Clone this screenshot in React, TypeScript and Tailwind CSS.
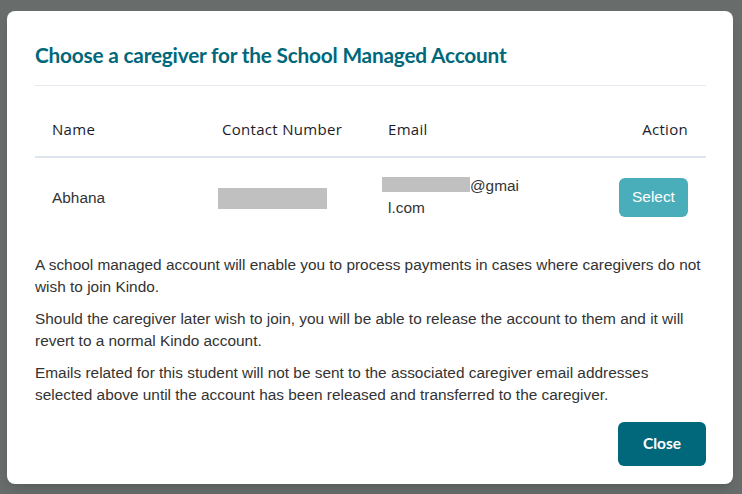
import React from 'react';

const rows = [{ name: 'Abhana' }];

const App = () => {
  return (
    <div className="w-[742px] h-[494px] bg-[#686d6b] pt-[11px] pl-[7px] overflow-hidden">
      <div className="w-[726px] h-[473px] bg-white rounded-lg shadow-lg pt-[30px] pl-[28px] pr-[27px] pb-[18px] flex flex-col">
        <h2 className="font-['Lato',sans-serif] text-[20.8px] leading-[28px] font-bold text-[#00687a] tracking-[-0.2px]">
          Choose a caregiver for the School Managed Account
        </h2>
        <div className="mt-[16px] h-px bg-[#e4e8ef]" />
        <table className="w-full border-collapse font-['Liberation_Sans',Arial,sans-serif]">
          <thead>
            <tr className="border-b-2 border-[#dfe5ee] text-[15px] tracking-[0.3px] text-[#1c1c2a] font-['Open_Sans',sans-serif]">
              <th className="w-[170px] text-left font-normal pl-[17px] pt-[33px] pb-[17px] leading-[20px]">Name</th>
              <th className="w-[166px] text-left font-normal pl-[17px] pt-[33px] pb-[17px] leading-[20px]">Contact Number</th>
              <th className="w-[160px] text-left font-normal pl-[17px] pt-[33px] pb-[17px] leading-[20px]">Email</th>
              <th className="text-right font-normal pr-[18px] pt-[33px] pb-[17px] leading-[20px]">Action</th>
            </tr>
          </thead>
          <tbody>
            {rows.map(r => (
              <tr key={r.name} className="h-[79px] text-[15.4px] text-[#333]">
                <td className="pl-[17px] pt-[1px] align-middle">{r.name}</td>
                <td className="pl-[13px] align-middle">
                  <div className="w-[109px] h-[21px] bg-[#c0c0c0] mt-[2px]" />
                </td>
                <td className="pl-[17px] pr-[14px] align-middle leading-[22px]">
                  <div className="w-[132px] break-all">
                    <span className="inline-block w-[88px] h-[15px] bg-[#c0c0c0] -ml-[6px] align-[-1px]" />@gmail.com
                  </div>
                </td>
                <td className="pr-[18px] align-middle text-right">
                  <button className="w-[69px] h-[39px] rounded-md bg-[#4aadba] text-white text-[15.4px]">Select</button>
                </td>
              </tr>
            ))}
          </tbody>
        </table>
        <div className="mt-[18px] text-[15.4px] leading-[22px] text-[#333] space-y-[10px] font-['Liberation_Sans',Arial,sans-serif]">
          <p>A school managed account will enable you to process payments in cases where caregivers do not wish to join Kindo.</p>
          <p>Should the caregiver later wish to join, you will be able to release the account to them and it will revert to a normal Kindo account.</p>
          <p>Emails related for this student will not be sent to the associated caregiver email addresses selected above until the account has been released and transferred to the caregiver.</p>
        </div>
        <div className="mt-auto flex justify-end">
          <button className="w-[88px] h-[44px] rounded-md bg-[#00687a] text-white text-[15.5px] font-bold font-['Lato',sans-serif]">Close</button>
        </div>
      </div>
    </div>
  );
};

export default App;
